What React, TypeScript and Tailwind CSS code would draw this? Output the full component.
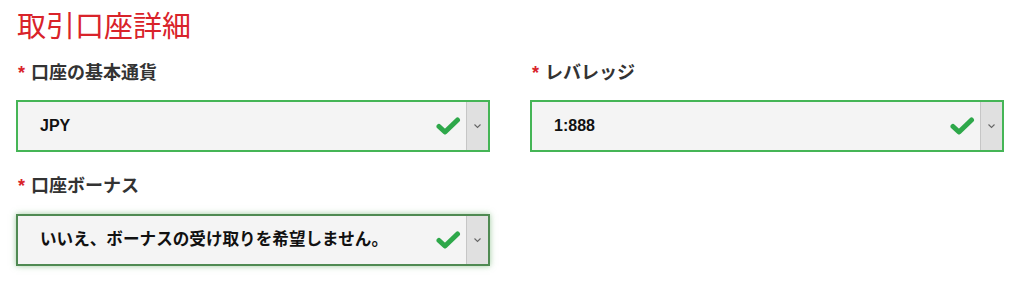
import React from 'react';

const Check = () => (
  <svg width="26" height="20" viewBox="0 0 26 20" className="shrink-0">
    <polyline points="4,10.5 10,16 22.5,4" fill="none" stroke="#2ea84a" strokeWidth="5" strokeLinecap="round" strokeLinejoin="round" />
  </svg>
);

const Chevron = () => (
  <svg width="9" height="6" viewBox="0 0 9 6">
    <polyline points="1.5,1.5 4.5,4.5 7.5,1.5" fill="none" stroke="#666" strokeWidth="1.1" />
  </svg>
);

interface SelectProps {
  value: string;
  focused?: boolean;
}

const FakeSelect = ({ value, focused }: SelectProps) => (
  <div
    className={
      focused
        ? 'flex h-[52px] w-[474px] items-stretch border-2 border-[#4f8a52] bg-[#f4f4f4] shadow-[0_0_6px_rgba(80,160,80,0.55)]'
        : 'flex h-[52px] w-[474px] items-stretch border-2 border-[#45b556] bg-[#f4f4f4]'
    }
  >
    <div className="flex flex-1 items-center pl-[22px] pr-[5px]">
      <span className={focused ? 'flex-1 text-[16.6px] font-bold text-[#111]' : 'flex-1 text-[16px] font-bold text-[#111]'}>
        {value}
      </span>
      <Check />
    </div>
    <div className="flex w-[22px] items-center justify-center border-l border-[#c6c6c6] bg-[#e0e0e0]">
      <Chevron />
    </div>
  </div>
);

const Label = ({ text }: { text: string }) => (
  <div className="flex h-[24px] items-center pl-[2px] text-[18px] font-bold leading-[24px] text-[#333]">
    <span className="mr-[6px] text-[#d9232a]">*</span>
    {text}
  </div>
);

export default function App() {
  return (
    <div
      className="h-[296px] w-[1024px] bg-white pl-[16px] pr-[20px] pt-[9px]"
      style={{ fontFamily: '"Liberation Sans", "Noto Sans CJK JP", sans-serif' }}
    >
      <h1 className="pl-[1px] text-[29px] font-normal leading-[36px] text-[#d9232a]">取引口座詳細</h1>
      <div className="mt-[16px] grid grid-cols-[474px_474px] gap-x-[40px]">
        <div className="flex flex-col gap-[15px]">
          <Label text="口座の基本通貨" />
          <FakeSelect value="JPY" />
        </div>
        <div className="flex flex-col gap-[15px]">
          <Label text="レバレッジ" />
          <FakeSelect value="1:888" />
        </div>
        <div className="mt-[22px] flex flex-col gap-[16px]">
          <Label text="口座ボーナス" />
          <FakeSelect value="いいえ、ボーナスの受け取りを希望しません。" focused />
        </div>
      </div>
    </div>
  );
}
